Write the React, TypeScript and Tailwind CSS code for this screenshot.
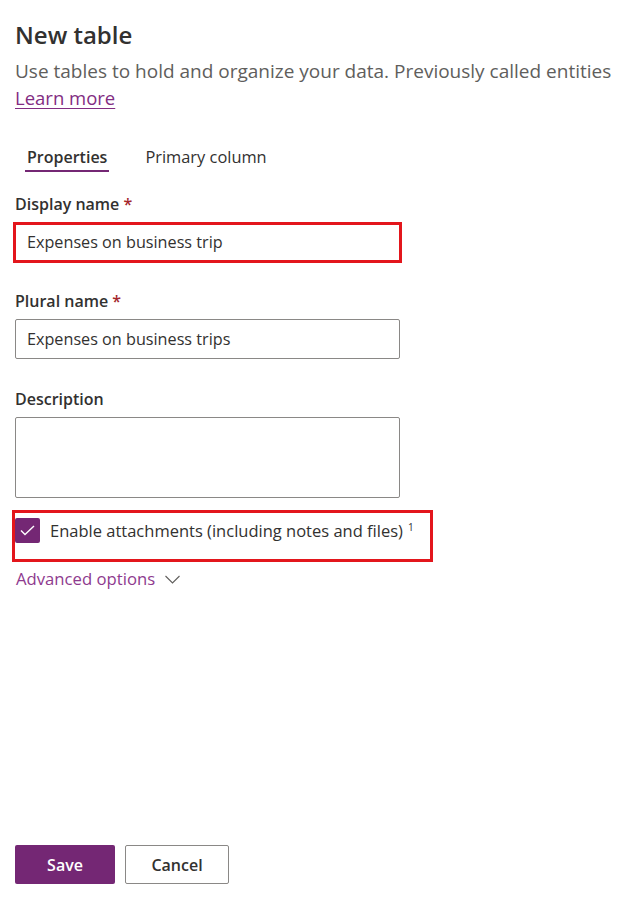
const font = { fontFamily: '"Open Sans", "Noto Sans", sans-serif' };

export default function App() {
  return (
    <div className="h-[902px] flex flex-col bg-white text-[#323130] pl-[15px]" style={font}>
      {/* Header */}
      <h1 className="text-[24px] leading-[30px] font-semibold mt-[20px]">New table</h1>
      <p className="text-[19px] leading-[24px] text-[#605e5c] mt-[9px] whitespace-nowrap">
        Use tables to hold and organize your data. Previously called entities
      </p>
      <a href="#" className="text-[18.5px] leading-[24px] text-[#822c82] underline underline-offset-[3px] w-fit mt-[3px]">
        Learn more
      </a>

      {/* Tabs */}
      <div className="flex gap-[38px] mt-[35px] pl-[12px]">
        <div className="flex flex-col">
          <span className="text-[16px] leading-[24px] font-semibold">Properties</span>
          <span className="h-[2px] bg-[#742774] mt-[1px] -mx-[2px]"></span>
        </div>
        <span className="text-[16.4px] leading-[24px] text-[#323130]">Primary column</span>
      </div>

      {/* Display name */}
      <label className="text-[16px] leading-[22px] font-semibold mt-[21px]">
        Display name <span className="text-[#a4262c]">*</span>
      </label>
      <div className="mt-[7px] -ml-[2px] w-[389px] h-[41px] border-[3px] border-[#e3161c] flex items-center pl-[11px]">
        <span className="text-[16.2px]">Expenses on business trip</span>
      </div>

      {/* Plural name */}
      <label className="text-[16px] leading-[22px] font-semibold mt-[27px]">
        Plural name <span className="text-[#a4262c]">*</span>
      </label>
      <div className="mt-[7px] w-[385px] h-[40px] border border-[#8a8886] rounded-[2px] flex items-center pl-[11px]">
        <span className="text-[16.2px]">Expenses on business trips</span>
      </div>

      {/* Description */}
      <label className="text-[16px] leading-[22px] font-semibold mt-[29px]">Description</label>
      <div className="mt-[7px] w-[385px] h-[81px] border border-[#8a8886] rounded-[2px]"></div>

      {/* Attachments checkbox */}
      <div className="mt-[12px] -ml-[3px] w-[421px] h-[52px] border-[3px] border-[#e3161c] flex items-start pt-[5px]">
        <div className="w-[25px] h-[25px] bg-[#742774] rounded-[2px] flex items-center justify-center">
          <svg width="15" height="11" viewBox="0 0 15 11" fill="none">
            <path d="M1 5.5 L5 9.5 L14 1" stroke="white" strokeWidth="1.4" />
          </svg>
        </div>
        <span className="text-[16.5px] leading-[25px] ml-[10px]">
          Enable attachments (including notes and files)
          <sup className="text-[10px] ml-[5px] -top-[6px]">1</sup>
        </span>
      </div>

      {/* Advanced */}
      <div className="flex items-center mt-[5px] ml-[1px] text-[#8e3a8e]">
        <span className="text-[16.7px] leading-[24px]">Advanced options</span>
        <svg width="15" height="9" viewBox="0 0 15 9" fill="none" className="ml-[10px] mt-[1px]">
          <path d="M0.5 1 L7.5 8 L14.5 1" stroke="#605e5c" strokeWidth="1.1" />
        </svg>
      </div>

      {/* Footer */}
      <div className="mt-auto mb-[18px] flex gap-[10px]">
        <button className="w-[100px] h-[39px] bg-[#742774] text-white text-[16px] font-semibold rounded-[2px]">
          Save
        </button>
        <button className="w-[104px] h-[39px] border border-[#8a8886] text-[#323130] text-[16px] font-semibold rounded-[2px]">
          Cancel
        </button>
      </div>
    </div>
  );
}
